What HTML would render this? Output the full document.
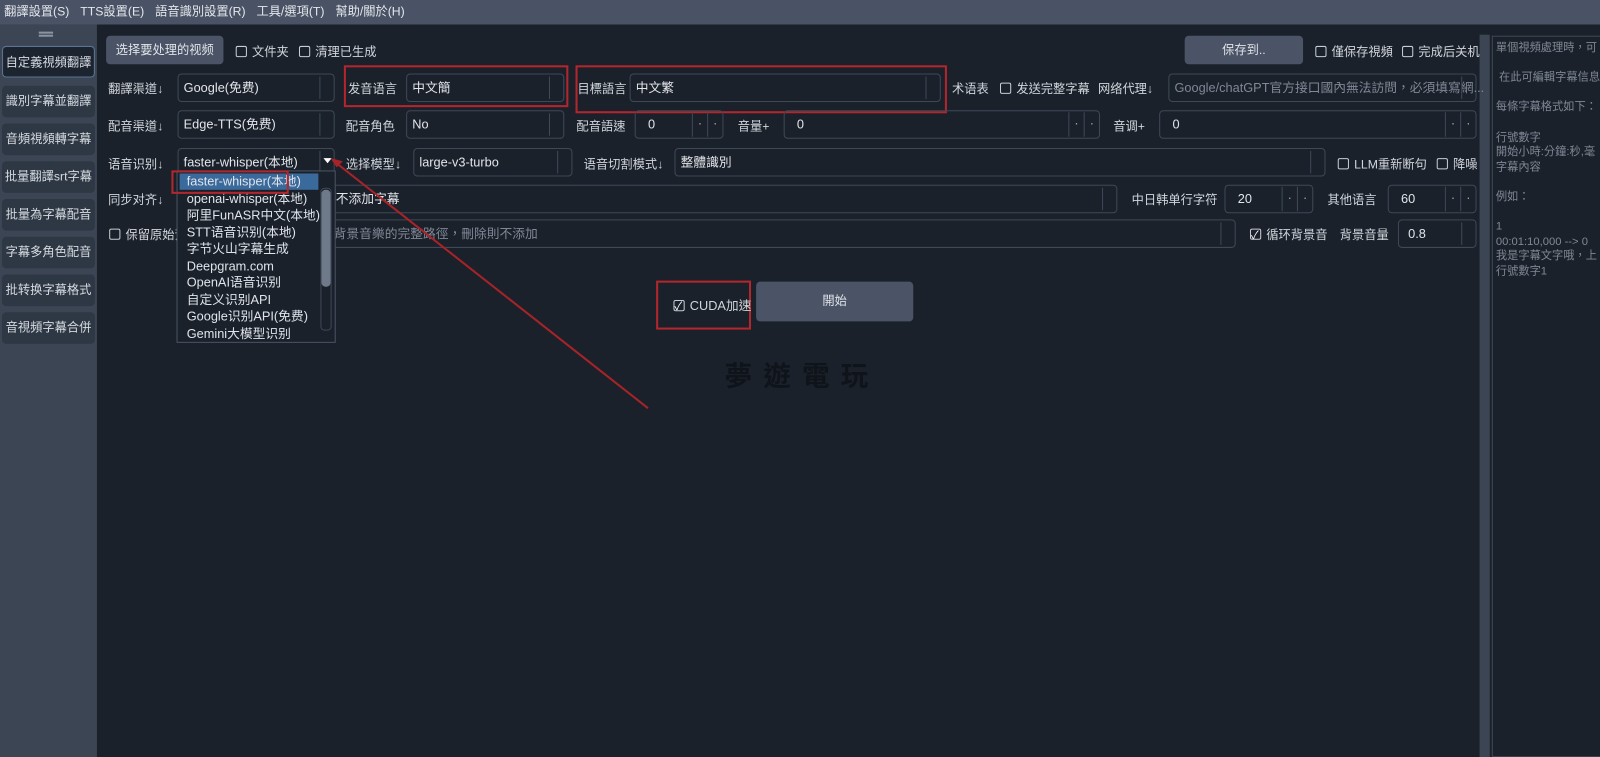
<!DOCTYPE html>
<html><head><meta charset="utf-8"><style>
*{box-sizing:border-box;margin:0;padding:0}
body{width:1600px;height:742px;background:#1b212b;font-family:"Liberation Sans","Noto Sans CJK TC",sans-serif;font-size:12px;color:#d2d6dc;position:relative;overflow:hidden}
#w{position:absolute;left:0;top:0;width:1568px;height:728px;transform:scale(1.0204);transform-origin:0 0}
.a{position:absolute;white-space:nowrap}
.menu{left:0;top:0;width:1600px;height:24px;background:#4a5365;color:#e4e7ec;font-size:12px;line-height:22px;padding-left:4px;word-spacing:2px}
.side{left:0;top:24px;width:95px;height:718px;background:#3b4554}
.sb{left:2px;width:91px;height:31px;background:#2e3845;border-radius:4px;color:#d6dae0;font-size:12px;text-align:center;line-height:31px}
.sb.on{background:#1c2430;border:1px solid #5a7594}
.btn{background:#4a5466;border-radius:4px;color:#e0e3e8;text-align:center}
.sel{height:28px;border:1px solid #3e4857;border-radius:4px;background:#1b212b;padding-left:5px;line-height:26px;color:#e2e5ea;font-size:12.5px}
.sel::after{content:"";position:absolute;right:0;top:2px;width:13px;height:22px;border-left:1px solid #3e4857}
.spin{height:28px;border:1px solid #3e4857;border-radius:4px;padding-left:12px;line-height:26px;color:#e2e5ea;font-size:12.5px}
.spin i{position:absolute;top:1px;width:15px;height:24px;border-left:1px solid #3e4857;font-style:normal;text-align:center;color:#aaa;line-height:22px}
.cb{display:inline-block;width:11px;height:11px;border:1px solid #c8ccd3;border-radius:2px;vertical-align:-1px;margin-right:5px;position:relative}
.cb.c::after{content:"✓";position:absolute;left:0;top:-3px;font-size:11px;color:#fff}
.lbl{color:#d2d6dc;font-size:12px}
.red{border:2px solid #b3262c}
.rp{left:1462px;top:35px;width:140px;height:707px;border:1px solid #3e4857;color:#7f8896;font-size:11px;line-height:14.6px;padding:4px 0 0 3px;white-space:pre;overflow:hidden}
</style></head><body><div id="w">
<div class="a menu">翻譯設置(S)&nbsp; TTS設置(E)&nbsp; 語音識別設置(R)&nbsp; 工具/選項(T)&nbsp; 幫助/關於(H)</div>
<div class="a side"></div>
<div class="a" style="left:38px;top:31px;width:14px;height:2px;background:#8a93a0;box-shadow:0 3px 0 #8a93a0"></div>
<div class="a sb on" style="top:45px">自定義視頻翻譯</div>
<div class="a sb" style="top:84px">識別字幕並翻譯</div>
<div class="a sb" style="top:121px">音頻視頻轉字幕</div>
<div class="a sb" style="top:158px">批量翻譯srt字幕</div>
<div class="a sb" style="top:195px">批量為字幕配音</div>
<div class="a sb" style="top:232px">字幕多角色配音</div>
<div class="a sb" style="top:269px">批转换字幕格式</div>
<div class="a sb" style="top:306px">音視頻字幕合併</div>
<div class="a" style="left:1450px;top:34px;width:10px;height:708px;background:#3b4554"></div>

<div class="a btn" style="left:104px;top:35px;width:115px;height:28px;line-height:28px">选择要处理的视频</div>
<div class="a" style="left:231px;top:42px"><span class="cb"></span>文件夹</div>
<div class="a" style="left:293px;top:42px"><span class="cb"></span>清理已生成</div>
<div class="a btn" style="left:1161px;top:35px;width:116px;height:28px;line-height:28px">保存到..</div>
<div class="a" style="left:1289px;top:42px"><span class="cb"></span>僅保存視頻</div>
<div class="a" style="left:1374px;top:42px"><span class="cb"></span>完成后关机</div>

<div class="a lbl" style="left:106px;top:78px">翻譯渠道↓</div>
<div class="a sel" style="left:174px;top:72px;width:154px">Google(免费)</div>
<div class="a red" style="left:337px;top:64px;width:220px;height:41px"></div>
<div class="a lbl" style="left:341px;top:78px">发音语言</div>
<div class="a sel" style="left:398px;top:72px;width:155px">中文簡</div>
<div class="a red" style="left:564px;top:64px;width:364px;height:47px"></div>
<div class="a lbl" style="left:566px;top:78px">目標語言</div>
<div class="a sel" style="left:617px;top:72px;width:305px">中文繁</div>
<div class="a lbl" style="left:933px;top:78px">术语表</div>
<div class="a" style="left:980px;top:78px"><span class="cb"></span>发送完整字幕</div>
<div class="a lbl" style="left:1076px;top:78px">网络代理↓</div>
<div class="a sel" style="left:1145px;top:72px;width:302px;color:#7f8896">Google/chatGPT官方接口國內無法訪問，必須填寫網...</div>

<div class="a lbl" style="left:106px;top:115px">配音渠道↓</div>
<div class="a sel" style="left:174px;top:108px;width:154px">Edge-TTS(免费)</div>
<div class="a lbl" style="left:339px;top:115px">配音角色</div>
<div class="a sel" style="left:398px;top:108px;width:155px">No</div>
<div class="a lbl" style="left:565px;top:115px">配音語速</div>
<div class="a spin" style="left:622px;top:108px;width:87px">0<i style="right:15px">·</i><i style="right:0">·</i></div>
<div class="a lbl" style="left:723px;top:115px">音量+</div>
<div class="a spin" style="left:768px;top:108px;width:310px">0<i style="right:15px">·</i><i style="right:0">·</i></div>
<div class="a lbl" style="left:1091px;top:115px">音调+</div>
<div class="a spin" style="left:1136px;top:108px;width:311px">0<i style="right:15px">·</i><i style="right:0">·</i></div>

<div class="a lbl" style="left:106px;top:152px">语音识别↓</div>
<div class="a sel" style="left:174px;top:145px;width:154px">faster-whisper(本地)</div>
<div class="a" style="left:317px;top:155px;width:0;height:0;border-left:4px solid transparent;border-right:4px solid transparent;border-top:5px solid #fff"></div>
<div class="a lbl" style="left:339px;top:152px">选择模型↓</div>
<div class="a sel" style="left:405px;top:145px;width:156px">large-v3-turbo</div>
<div class="a lbl" style="left:572px;top:152px">语音切割模式↓</div>
<div class="a sel" style="left:661px;top:145px;width:638px">整體識別</div>
<div class="a" style="left:1311px;top:152px"><span class="cb"></span>LLM重新断句</div>
<div class="a" style="left:1408px;top:152px"><span class="cb"></span>降噪</div>

<div class="a lbl" style="left:106px;top:187px">同步对齐↓</div>
<div class="a sel" style="left:174px;top:181px;width:921px;padding-left:154px">不添加字幕</div>
<div class="a lbl" style="left:1109px;top:187px">中日韩单行字符</div>
<div class="a spin" style="left:1200px;top:181px;width:87px">20<i style="right:15px">·</i><i style="right:0">·</i></div>
<div class="a lbl" style="left:1301px;top:187px">其他语言</div>
<div class="a spin" style="left:1360px;top:181px;width:87px">60<i style="right:15px">·</i><i style="right:0">·</i></div>

<div class="a" style="left:107px;top:221px"><span class="cb"></span>保留原始背</div>
<div class="a sel" style="left:174px;top:215px;width:1037px;padding-left:152px;color:#7f8896">背景音樂的完整路徑，刪除則不添加</div>
<div class="a" style="left:1225px;top:221px"><span class="cb c"></span>循环背景音</div>
<div class="a lbl" style="left:1313px;top:221px">背景音量</div>
<div class="a sel" style="left:1370px;top:215px;width:77px;padding-left:9px">0.8</div>

<div class="a" style="left:173px;top:167px;width:156px;height:169px;background:#1b212b;border:1px solid #4a5465"></div>
<div class="a" style="left:176px;top:170px;width:136px;height:16px;background:#3a6a9b"></div>
<div class="a" style="left:315px;top:186px;width:9px;height:95px;background:#6e7a8a;border-radius:4px"></div>
<div class="a" style="left:314px;top:184px;width:11px;height:140px;border:1px solid #3e4857;border-radius:4px"></div>
<div class="a" style="left:183px;top:170px;font-size:12.5px;line-height:16.5px;color:#e0e4ea">faster-whisper(本地)<br>openai-whisper(本地)<br>阿里FunASR中文(本地)<br>STT语音识别(本地)<br>字节火山字幕生成<br>Deepgram.com<br>OpenAI语音识别<br>自定义识别API<br>Google识别API(免费)<br>Gemini大模型识别</div>
<div class="a red" style="left:168px;top:167px;width:115px;height:23px"></div>

<div class="a red" style="left:643px;top:275px;width:93px;height:48px"></div>
<div class="a" style="left:660px;top:289px;font-size:12.5px"><span class="cb c"></span>CUDA加速</div>
<div class="a btn" style="left:741px;top:276px;width:154px;height:39px;line-height:39px">開始</div>
<div class="a" style="left:710px;top:347px;font-size:27px;letter-spacing:11px;color:#0f141a;font-weight:bold">夢遊電玩</div>

<svg class="a" style="left:0;top:0" width="1600" height="742"><line x1="326" y1="157" x2="635" y2="400" stroke="#a82328" stroke-width="2"/><polygon points="324,155 336,158 330,164" fill="#a82328"/></svg>

<div class="a rp">單個視頻處理時，可

 在此可編輯字幕信息

每條字幕格式如下：

行號數字
開始小時:分鐘:秒,毫
字幕內容

例如：

1
00:01:10,000 --> 0
我是字幕文字哦，上
行號數字1</div>
</div></body></html>
